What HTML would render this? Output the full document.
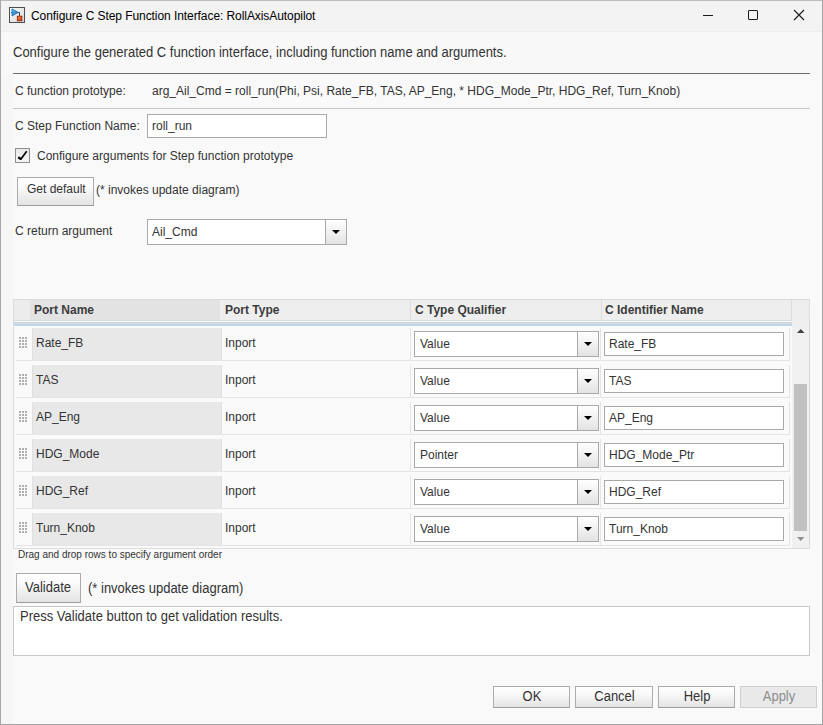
<!DOCTYPE html>
<html><head><meta charset="utf-8">
<style>
*{margin:0;padding:0;box-sizing:border-box}
html,body{width:823px;height:725px;overflow:hidden;background:#f6f6f6}
body{position:relative;font-family:"Liberation Sans",sans-serif;color:#333;font-size:12px}
.a{position:absolute;white-space:nowrap}
.t{position:absolute;white-space:nowrap;line-height:1}
#win{position:absolute;left:0;top:0;width:823px;height:725px;border:1px solid #a8a8a8;border-right:none;border-bottom:none}
#title{position:absolute;left:1px;top:1px;width:821px;height:31px;background:#f3f3f3}
.btn{position:absolute;border:1px solid #acacac;border-bottom-color:#9c9c9c;background:linear-gradient(#ffffff 0%,#fbfbfb 30%,#e3e3e3 100%)}
.inp{position:absolute;border:1px solid #a9a9a9;background:#fff}
.combo{position:absolute;border:1px solid #a9a9a9;background:#fff}
.combo .dd{position:absolute;right:0;top:0;bottom:0;width:21px;border-left:1px solid #a9a9a9;background:linear-gradient(#ffffff,#e3e3e3)}
.combo .dd:after{content:"";position:absolute;left:5.5px;top:10px;border-left:4px solid transparent;border-right:4px solid transparent;border-top:4px solid #000}
.grip{position:absolute;width:8px;height:11px;background-image:radial-gradient(#a8a8a8 0,#a8a8a8 0);}
</style></head><body>
<div id="title"></div>
<div class="a" style="left:1px;top:31px;width:821px;height:1px;background:#eeeeee"></div>
<div class="a" style="left:13px;top:74px;width:809px;height:650px;background:#f9f9f9"></div>
<div class="a" style="left:1px;top:32px;width:821px;height:42px;background:#f8f8f8"></div>
<!-- app icon -->
<svg class="a" style="left:9px;top:7px" width="16" height="16" viewBox="0 0 16 16">
  <defs><linearGradient id="ig" x1="0" y1="0" x2="1" y2="1"><stop offset="0" stop-color="#ffffff"/><stop offset="1" stop-color="#d4d4d4"/></linearGradient>
  <linearGradient id="tg" x1="0" y1="0" x2="1" y2="1"><stop offset="0" stop-color="#5cc0ee"/><stop offset="1" stop-color="#1a6fb8"/></linearGradient>
  <linearGradient id="rg" x1="0" y1="0" x2="1" y2="1"><stop offset="0" stop-color="#f88040"/><stop offset="1" stop-color="#d84010"/></linearGradient></defs>
  <rect x="0.5" y="0.5" width="15" height="15" fill="url(#ig)" stroke="#4e4e4e"/>
  <path d="M2 5.5 H3.5" stroke="#505050" stroke-width="1"/>
  <path d="M9 5.5 H10.5 V9" fill="none" stroke="#404040" stroke-width="1"/>
  <path d="M3 1.8 L9.3 5.4 L3 9 Z" fill="url(#tg)" stroke="#1860a8" stroke-width="0.7"/>
  <rect x="8.3" y="9.2" width="4.6" height="4.6" fill="url(#rg)" stroke="#902000" stroke-width="0.8"/>
</svg>
<div class="t" style="left:31px;top:10px;font-size:12px;color:#000;letter-spacing:-0.07px">Configure C Step Function Interface: RollAxisAutopilot</div>
<!-- window controls -->
<div class="a" style="left:703px;top:15px;width:10px;height:1px;background:#1a1a1a"></div>
<div class="a" style="left:748px;top:10px;width:10px;height:10px;border:1px solid #1a1a1a;border-radius:1px"></div>
<svg class="a" style="left:793px;top:9px" width="12" height="12" viewBox="0 0 12 12"><path d="M1 1 L11 11 M11 1 L1 11" stroke="#1a1a1a" stroke-width="1.1"/></svg>

<div class="t" style="left:13px;top:46px;font-size:13px;transform:scaleY(1.1);transform-origin:0 11px">Configure the generated C function interface, including function name and arguments.</div>
<div class="a" style="left:13px;top:73px;width:797px;height:1px;background:#6e6e6e"></div>
<div class="t" style="left:15px;top:85px">C function prototype:</div>
<div class="t" style="left:152px;top:85px">arg_Ail_Cmd = roll_run(Phi, Psi, Rate_FB, TAS, AP_Eng, * HDG_Mode_Ptr, HDG_Ref, Turn_Knob)</div>
<div class="a" style="left:13px;top:108px;width:797px;height:1px;background:#c8c8c8"></div>

<div class="t" style="left:15px;top:120px">C Step Function Name:</div>
<div class="inp" style="left:147px;top:114px;width:180px;height:24px"></div>
<div class="t" style="left:152px;top:120px">roll_run</div>

<div class="a" style="left:15px;top:148px;width:15px;height:15px;border:1px solid #8e8e8e;background:linear-gradient(#e9e9e9,#f7f7f7)"></div>
<svg class="a" style="left:15px;top:148px" width="15" height="15" viewBox="0 0 15 15"><path d="M3.2 9.3 L6.2 11.4" stroke="#000" stroke-width="2.3" fill="none"/><path d="M5.6 11.6 L11.7 3.3" stroke="#000" stroke-width="1.7" fill="none"/></svg>
<div class="t" style="left:37px;top:150px">Configure arguments for Step function prototype</div>

<div class="btn" style="left:17px;top:177px;width:77px;height:29px"></div>
<div class="t" style="left:27px;top:183px">Get default</div>
<div class="t" style="left:96px;top:184px">(* invokes update diagram)</div>

<div class="t" style="left:15px;top:225px">C return argument</div>
<div class="combo" style="left:147px;top:219px;width:200px;height:26px"><div class="dd"></div></div>
<div class="t" style="left:152px;top:226px">Ail_Cmd</div>

<!-- table -->
<div id="table"><div class="a" style="left:13px;top:299px;width:797px;height:250px;border:1px solid #dcdcdc;background:#fafafa"></div>
<div class="a" style="left:14px;top:300px;width:778px;height:21px;background:#eeeeee;border-bottom:1px solid #d9d9d9"></div>
<div class="a" style="left:14px;top:300px;width:16px;height:20px;background:#ececec"></div>
<div class="a" style="left:30px;top:300px;width:190px;height:20px;background:#e3e3e3"></div>
<div class="a" style="left:410px;top:300px;width:1px;height:20px;background:#dcdcdc"></div>
<div class="a" style="left:601px;top:300px;width:1px;height:20px;background:#dcdcdc"></div>
<div class="a" style="left:791px;top:300px;width:1px;height:20px;background:#dcdcdc"></div>
<div class="a" style="left:792px;top:300px;width:17px;height:21px;background:#eeeeee"></div>
<div class="t" style="left:34px;top:304px;font-weight:bold;color:#3c3c3c">Port Name</div>
<div class="t" style="left:225px;top:304px;font-weight:bold;color:#3c3c3c">Port Type</div>
<div class="t" style="left:415px;top:304px;font-weight:bold;color:#3c3c3c">C Type Qualifier</div>
<div class="t" style="left:605px;top:304px;font-weight:bold;color:#3c3c3c">C Identifier Name</div>
<div class="a" style="left:14px;top:322px;width:778px;height:1px;background:#c6d3e0"></div>
<div class="a" style="left:14px;top:323px;width:778px;height:1px;background:#d9dbdd"></div>
<div class="a" style="left:14px;top:324px;width:778px;height:2px;background:#bfd5ea"></div>
<div class="a" style="left:792px;top:321px;width:17px;height:227px;background:#f0f0f0"></div>
<div class="a" style="left:794px;top:384px;width:13px;height:147px;background:#c1c1c1"></div>
<svg class="a" style="left:796px;top:328px" width="10" height="6"><path d="M1 5 H8.5 L4.75 1 Z" fill="#404040"/></svg>
<svg class="a" style="left:796px;top:536px" width="10" height="6"><path d="M1 1 H8.5 L4.75 5 Z" fill="#8f8f8f"/></svg>
<div class="a" style="left:16px;top:360px;width:774px;height:1px;background:#e4e4e4"></div>
<div class="a" style="left:789px;top:328px;width:1px;height:32px;background:#e4e4e4"></div>
<div class="a" style="left:410px;top:328px;width:1px;height:32px;background:#e4e4e4"></div>
<div class="a" style="left:600px;top:328px;width:1px;height:32px;background:#e4e4e4"></div>
<div class="a" style="left:19px;top:337px;width:2px;height:2px;background:#b0b0b0"></div>
<div class="a" style="left:19px;top:340px;width:2px;height:2px;background:#b0b0b0"></div>
<div class="a" style="left:19px;top:343px;width:2px;height:2px;background:#b0b0b0"></div>
<div class="a" style="left:19px;top:346px;width:2px;height:2px;background:#b0b0b0"></div>
<div class="a" style="left:22px;top:337px;width:2px;height:2px;background:#b0b0b0"></div>
<div class="a" style="left:22px;top:340px;width:2px;height:2px;background:#b0b0b0"></div>
<div class="a" style="left:22px;top:343px;width:2px;height:2px;background:#b0b0b0"></div>
<div class="a" style="left:22px;top:346px;width:2px;height:2px;background:#b0b0b0"></div>
<div class="a" style="left:25px;top:337px;width:2px;height:2px;background:#b0b0b0"></div>
<div class="a" style="left:25px;top:340px;width:2px;height:2px;background:#b0b0b0"></div>
<div class="a" style="left:25px;top:343px;width:2px;height:2px;background:#b0b0b0"></div>
<div class="a" style="left:25px;top:346px;width:2px;height:2px;background:#b0b0b0"></div>
<div class="a" style="left:32px;top:328px;width:190px;height:32px;background:#e8e8e8;border-left:1px solid #e0e0e0;border-right:1px solid #e0e0e0"></div>
<div class="t" style="left:36px;top:337px">Rate_FB</div>
<div class="t" style="left:225px;top:337px">Inport</div>
<div class="combo" style="left:414px;top:331px;width:185px;height:26px"><div class="dd"></div></div>
<div class="t" style="left:420px;top:338px">Value</div>
<div class="inp" style="left:604px;top:332px;width:180px;height:24px"></div>
<div class="t" style="left:609px;top:338px">Rate_FB</div>
<div class="a" style="left:16px;top:397px;width:774px;height:1px;background:#e4e4e4"></div>
<div class="a" style="left:789px;top:365px;width:1px;height:32px;background:#e4e4e4"></div>
<div class="a" style="left:410px;top:365px;width:1px;height:32px;background:#e4e4e4"></div>
<div class="a" style="left:600px;top:365px;width:1px;height:32px;background:#e4e4e4"></div>
<div class="a" style="left:19px;top:374px;width:2px;height:2px;background:#b0b0b0"></div>
<div class="a" style="left:19px;top:377px;width:2px;height:2px;background:#b0b0b0"></div>
<div class="a" style="left:19px;top:380px;width:2px;height:2px;background:#b0b0b0"></div>
<div class="a" style="left:19px;top:383px;width:2px;height:2px;background:#b0b0b0"></div>
<div class="a" style="left:22px;top:374px;width:2px;height:2px;background:#b0b0b0"></div>
<div class="a" style="left:22px;top:377px;width:2px;height:2px;background:#b0b0b0"></div>
<div class="a" style="left:22px;top:380px;width:2px;height:2px;background:#b0b0b0"></div>
<div class="a" style="left:22px;top:383px;width:2px;height:2px;background:#b0b0b0"></div>
<div class="a" style="left:25px;top:374px;width:2px;height:2px;background:#b0b0b0"></div>
<div class="a" style="left:25px;top:377px;width:2px;height:2px;background:#b0b0b0"></div>
<div class="a" style="left:25px;top:380px;width:2px;height:2px;background:#b0b0b0"></div>
<div class="a" style="left:25px;top:383px;width:2px;height:2px;background:#b0b0b0"></div>
<div class="a" style="left:32px;top:365px;width:190px;height:32px;background:#e8e8e8;border-left:1px solid #e0e0e0;border-right:1px solid #e0e0e0"></div>
<div class="t" style="left:36px;top:374px">TAS</div>
<div class="t" style="left:225px;top:374px">Inport</div>
<div class="combo" style="left:414px;top:368px;width:185px;height:26px"><div class="dd"></div></div>
<div class="t" style="left:420px;top:375px">Value</div>
<div class="inp" style="left:604px;top:369px;width:180px;height:24px"></div>
<div class="t" style="left:609px;top:375px">TAS</div>
<div class="a" style="left:16px;top:434px;width:774px;height:1px;background:#e4e4e4"></div>
<div class="a" style="left:789px;top:402px;width:1px;height:32px;background:#e4e4e4"></div>
<div class="a" style="left:410px;top:402px;width:1px;height:32px;background:#e4e4e4"></div>
<div class="a" style="left:600px;top:402px;width:1px;height:32px;background:#e4e4e4"></div>
<div class="a" style="left:19px;top:411px;width:2px;height:2px;background:#b0b0b0"></div>
<div class="a" style="left:19px;top:414px;width:2px;height:2px;background:#b0b0b0"></div>
<div class="a" style="left:19px;top:417px;width:2px;height:2px;background:#b0b0b0"></div>
<div class="a" style="left:19px;top:420px;width:2px;height:2px;background:#b0b0b0"></div>
<div class="a" style="left:22px;top:411px;width:2px;height:2px;background:#b0b0b0"></div>
<div class="a" style="left:22px;top:414px;width:2px;height:2px;background:#b0b0b0"></div>
<div class="a" style="left:22px;top:417px;width:2px;height:2px;background:#b0b0b0"></div>
<div class="a" style="left:22px;top:420px;width:2px;height:2px;background:#b0b0b0"></div>
<div class="a" style="left:25px;top:411px;width:2px;height:2px;background:#b0b0b0"></div>
<div class="a" style="left:25px;top:414px;width:2px;height:2px;background:#b0b0b0"></div>
<div class="a" style="left:25px;top:417px;width:2px;height:2px;background:#b0b0b0"></div>
<div class="a" style="left:25px;top:420px;width:2px;height:2px;background:#b0b0b0"></div>
<div class="a" style="left:32px;top:402px;width:190px;height:32px;background:#e8e8e8;border-left:1px solid #e0e0e0;border-right:1px solid #e0e0e0"></div>
<div class="t" style="left:36px;top:411px">AP_Eng</div>
<div class="t" style="left:225px;top:411px">Inport</div>
<div class="combo" style="left:414px;top:405px;width:185px;height:26px"><div class="dd"></div></div>
<div class="t" style="left:420px;top:412px">Value</div>
<div class="inp" style="left:604px;top:406px;width:180px;height:24px"></div>
<div class="t" style="left:609px;top:412px">AP_Eng</div>
<div class="a" style="left:16px;top:471px;width:774px;height:1px;background:#e4e4e4"></div>
<div class="a" style="left:789px;top:439px;width:1px;height:32px;background:#e4e4e4"></div>
<div class="a" style="left:410px;top:439px;width:1px;height:32px;background:#e4e4e4"></div>
<div class="a" style="left:600px;top:439px;width:1px;height:32px;background:#e4e4e4"></div>
<div class="a" style="left:19px;top:448px;width:2px;height:2px;background:#b0b0b0"></div>
<div class="a" style="left:19px;top:451px;width:2px;height:2px;background:#b0b0b0"></div>
<div class="a" style="left:19px;top:454px;width:2px;height:2px;background:#b0b0b0"></div>
<div class="a" style="left:19px;top:457px;width:2px;height:2px;background:#b0b0b0"></div>
<div class="a" style="left:22px;top:448px;width:2px;height:2px;background:#b0b0b0"></div>
<div class="a" style="left:22px;top:451px;width:2px;height:2px;background:#b0b0b0"></div>
<div class="a" style="left:22px;top:454px;width:2px;height:2px;background:#b0b0b0"></div>
<div class="a" style="left:22px;top:457px;width:2px;height:2px;background:#b0b0b0"></div>
<div class="a" style="left:25px;top:448px;width:2px;height:2px;background:#b0b0b0"></div>
<div class="a" style="left:25px;top:451px;width:2px;height:2px;background:#b0b0b0"></div>
<div class="a" style="left:25px;top:454px;width:2px;height:2px;background:#b0b0b0"></div>
<div class="a" style="left:25px;top:457px;width:2px;height:2px;background:#b0b0b0"></div>
<div class="a" style="left:32px;top:439px;width:190px;height:32px;background:#e8e8e8;border-left:1px solid #e0e0e0;border-right:1px solid #e0e0e0"></div>
<div class="t" style="left:36px;top:448px">HDG_Mode</div>
<div class="t" style="left:225px;top:448px">Inport</div>
<div class="combo" style="left:414px;top:442px;width:185px;height:26px"><div class="dd"></div></div>
<div class="t" style="left:420px;top:449px">Pointer</div>
<div class="inp" style="left:604px;top:443px;width:180px;height:24px"></div>
<div class="t" style="left:609px;top:449px">HDG_Mode_Ptr</div>
<div class="a" style="left:16px;top:508px;width:774px;height:1px;background:#e4e4e4"></div>
<div class="a" style="left:789px;top:476px;width:1px;height:32px;background:#e4e4e4"></div>
<div class="a" style="left:410px;top:476px;width:1px;height:32px;background:#e4e4e4"></div>
<div class="a" style="left:600px;top:476px;width:1px;height:32px;background:#e4e4e4"></div>
<div class="a" style="left:19px;top:485px;width:2px;height:2px;background:#b0b0b0"></div>
<div class="a" style="left:19px;top:488px;width:2px;height:2px;background:#b0b0b0"></div>
<div class="a" style="left:19px;top:491px;width:2px;height:2px;background:#b0b0b0"></div>
<div class="a" style="left:19px;top:494px;width:2px;height:2px;background:#b0b0b0"></div>
<div class="a" style="left:22px;top:485px;width:2px;height:2px;background:#b0b0b0"></div>
<div class="a" style="left:22px;top:488px;width:2px;height:2px;background:#b0b0b0"></div>
<div class="a" style="left:22px;top:491px;width:2px;height:2px;background:#b0b0b0"></div>
<div class="a" style="left:22px;top:494px;width:2px;height:2px;background:#b0b0b0"></div>
<div class="a" style="left:25px;top:485px;width:2px;height:2px;background:#b0b0b0"></div>
<div class="a" style="left:25px;top:488px;width:2px;height:2px;background:#b0b0b0"></div>
<div class="a" style="left:25px;top:491px;width:2px;height:2px;background:#b0b0b0"></div>
<div class="a" style="left:25px;top:494px;width:2px;height:2px;background:#b0b0b0"></div>
<div class="a" style="left:32px;top:476px;width:190px;height:32px;background:#e8e8e8;border-left:1px solid #e0e0e0;border-right:1px solid #e0e0e0"></div>
<div class="t" style="left:36px;top:485px">HDG_Ref</div>
<div class="t" style="left:225px;top:485px">Inport</div>
<div class="combo" style="left:414px;top:479px;width:185px;height:26px"><div class="dd"></div></div>
<div class="t" style="left:420px;top:486px">Value</div>
<div class="inp" style="left:604px;top:480px;width:180px;height:24px"></div>
<div class="t" style="left:609px;top:486px">HDG_Ref</div>
<div class="a" style="left:16px;top:545px;width:774px;height:1px;background:#e4e4e4"></div>
<div class="a" style="left:789px;top:513px;width:1px;height:32px;background:#e4e4e4"></div>
<div class="a" style="left:410px;top:513px;width:1px;height:32px;background:#e4e4e4"></div>
<div class="a" style="left:600px;top:513px;width:1px;height:32px;background:#e4e4e4"></div>
<div class="a" style="left:19px;top:522px;width:2px;height:2px;background:#b0b0b0"></div>
<div class="a" style="left:19px;top:525px;width:2px;height:2px;background:#b0b0b0"></div>
<div class="a" style="left:19px;top:528px;width:2px;height:2px;background:#b0b0b0"></div>
<div class="a" style="left:19px;top:531px;width:2px;height:2px;background:#b0b0b0"></div>
<div class="a" style="left:22px;top:522px;width:2px;height:2px;background:#b0b0b0"></div>
<div class="a" style="left:22px;top:525px;width:2px;height:2px;background:#b0b0b0"></div>
<div class="a" style="left:22px;top:528px;width:2px;height:2px;background:#b0b0b0"></div>
<div class="a" style="left:22px;top:531px;width:2px;height:2px;background:#b0b0b0"></div>
<div class="a" style="left:25px;top:522px;width:2px;height:2px;background:#b0b0b0"></div>
<div class="a" style="left:25px;top:525px;width:2px;height:2px;background:#b0b0b0"></div>
<div class="a" style="left:25px;top:528px;width:2px;height:2px;background:#b0b0b0"></div>
<div class="a" style="left:25px;top:531px;width:2px;height:2px;background:#b0b0b0"></div>
<div class="a" style="left:32px;top:513px;width:190px;height:32px;background:#e8e8e8;border-left:1px solid #e0e0e0;border-right:1px solid #e0e0e0"></div>
<div class="t" style="left:36px;top:522px">Turn_Knob</div>
<div class="t" style="left:225px;top:522px">Inport</div>
<div class="combo" style="left:414px;top:516px;width:185px;height:26px"><div class="dd"></div></div>
<div class="t" style="left:420px;top:523px">Value</div>
<div class="inp" style="left:604px;top:517px;width:180px;height:24px"></div>
<div class="t" style="left:609px;top:523px">Turn_Knob</div></div><!--endtable-->

<div class="t" style="left:18px;top:550px;font-size:10px">Drag and drop rows to specify argument order</div>

<div class="btn" style="left:16px;top:573px;width:65px;height:30px"></div>
<div class="t" style="left:25px;top:581px;font-size:13px;transform:scaleY(1.1);transform-origin:0 11px">Validate</div>
<div class="t" style="left:88px;top:582px;font-size:13px;transform:scaleY(1.1);transform-origin:0 11px">(* invokes update diagram)</div>
<div class="a" style="left:13px;top:606px;width:797px;height:50px;border:1px solid #c8c8c8;background:#fff"></div>
<div class="t" style="left:20px;top:610px;font-size:13px;transform:scaleY(1.1);transform-origin:0 11px">Press Validate button to get validation results.</div>

<div class="btn" style="left:493px;top:686px;width:77px;height:22px"></div>
<div class="t" style="left:493px;width:77px;text-align:center;top:690px;font-size:13px;transform:scaleY(1.1);transform-origin:0 11px;padding-left:1px">OK</div>
<div class="btn" style="left:575px;top:686px;width:78px;height:22px"></div>
<div class="t" style="left:575px;width:78px;text-align:center;top:690px;font-size:13px;transform:scaleY(1.1);transform-origin:0 11px;padding-left:1px">Cancel</div>
<div class="btn" style="left:658px;top:686px;width:77px;height:22px"></div>
<div class="t" style="left:658px;width:77px;text-align:center;top:690px;font-size:13px;transform:scaleY(1.1);transform-origin:0 11px;padding-left:1px">Help</div>
<div class="a" style="left:740px;top:686px;width:77px;height:22px;border:1px solid #cfcfcf;background:#e9e9e9"></div>
<div class="t" style="left:740px;width:77px;text-align:center;top:690px;font-size:13px;transform:scaleY(1.1);transform-origin:0 11px;padding-left:1px;color:#8d8d8d">Apply</div>

<div class="a" style="left:822px;top:0;width:1px;height:725px;background:#a4a4a4"></div>
<div class="a" style="left:0;top:724px;width:823px;height:1px;background:#a4a4a4"></div>
<div class="a" style="left:0;top:0;width:823px;height:1px;background:#bdbdbd"></div>
<div class="a" style="left:0;top:0;width:1px;height:725px;background:#a8a8a8"></div>
</body></html>
